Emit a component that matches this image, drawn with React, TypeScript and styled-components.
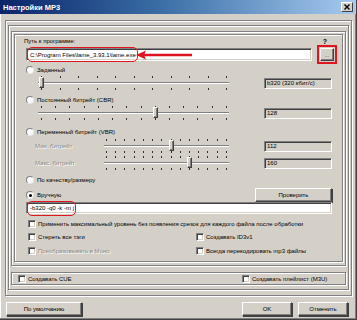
import React from "react";
import styled, { createGlobalStyle } from "styled-components";

const GlobalStyle = createGlobalStyle`
  html, body { margin: 0; padding: 0; background: #d4d0c8; }
  body { font-family: "Liberation Sans", Arial, sans-serif; }
  * { box-sizing: border-box; }
`;

const Window = styled.div`
  width: 357px;
  height: 320px;
  background: #d4d0c8;
  display: flex;
  flex-direction: column;
  border-right: 1px solid #404040;
  border-bottom: 1px solid #404040;
  box-shadow: inset -1px -1px 0 #808080, inset 1px 0 0 #fff;
  font-size: 6px;
  color: #000;
  overflow: hidden;
`;

const TitleBar = styled.div`
  height: 14px;
  flex: none;
  display: flex;
  align-items: center;
  justify-content: space-between;
  padding: 0 3px 0 3px;
  background: linear-gradient(to right, #0a246a 0%, #3a6ea5 45%, #a6caf0 100%);
`;

const Title = styled.span`
  color: #fff;
  font-weight: bold;
  font-size: 7.5px;
`;

const CloseBtn = styled.div`
  width: 12px;
  height: 10px;
  background: #d4d0c8;
  border: 1px solid;
  border-color: #fff #404040 #404040 #fff;
  display: flex;
  align-items: center;
  justify-content: center;
`;

const Body = styled.div`
  flex: 1;
  display: flex;
  flex-direction: column;
  padding: 6px 4px 0 5px;
`;

const etched = `
  border: 1px solid #808080;
  box-shadow: inset 1px 1px 0 #fff, 1px 1px 0 #fff;
`;

const OuterFrame = styled.div`
  ${etched}
  height: 276px;
  flex: none;
  padding: 4px 2px 0 2px;
  display: flex;
  flex-direction: column;
`;

const InnerFrame = styled.div`
  ${etched}
  height: 265px;
  flex: none;
  padding: 5px 2px 4px 2px;
  display: flex;
  flex-direction: column;
`;

const MainGroup = styled.div`
  ${etched}
  height: 235px;
  flex: none;
  padding: 2px;
  display: flex;
  flex-direction: column;
`;

const Group = styled.div`
  ${etched}
  height: 228px;
  flex: none;
  padding: 1px 8px 0 9px;
  display: flex;
  flex-direction: column;
`;

const CueGroup = styled.div`
  ${etched}
  margin-top: 6px;
  height: 13px;
  flex: none;
  display: flex;
  align-items: center;
  padding: 0 0 0 6px;
`;

const Row = styled.div<{ $h: number; $mt?: number }>`
  display: flex;
  align-items: center;
  flex: none;
  height: ${(p) => p.$h}px;
  margin-top: ${(p) => p.$mt ?? 0}px;
  padding-right: 2px;
  position: relative;
`;

const Label = styled.span<{ $w?: number; $ml?: number; $disabled?: boolean }>`
  white-space: nowrap;
  flex: none;
  width: ${(p) => (p.$w ? `${p.$w}px` : "auto")};
  margin-left: ${(p) => p.$ml ?? 0}px;
  color: ${(p) => (p.$disabled ? "#8a8a8a" : "#000")};
  text-shadow: ${(p) => (p.$disabled ? "1px 1px 0 #fff" : "none")};
`;

const Help = styled.span`
  margin-left: auto;
  margin-right: 5px;
  font-weight: bold;
  font-size: 7px;
`;

const sunken = `
  border: 1px solid;
  border-color: #808080 #fff #fff #808080;
  box-shadow: inset 1px 1px 0 #404040, inset -1px -1px 0 #d4d0c8;
`;

const raised = `
  border: 1px solid;
  border-color: #fff #404040 #404040 #fff;
  box-shadow: inset -1px -1px 0 #808080;
  background: #d4d0c8;
`;

const TextBox = styled.div<{ $w?: number; $h: number; $ml?: number; $white?: boolean; $grow?: boolean }>`
  ${sunken}
  flex: ${(p) => (p.$grow ? "1" : "none")};
  position: relative;
  width: ${(p) => (p.$w ? `${p.$w}px` : "auto")};
  height: ${(p) => p.$h}px;
  margin-left: ${(p) => (p.$ml === undefined ? "auto" : `${p.$ml}px`)};
  background: ${(p) => (p.$white ? "#fff" : "#d4d0c8")};
  display: flex;
  align-items: center;
  padding-left: 2px;
  white-space: nowrap;
`;

const Highlight = styled.span`
  display: inline-flex;
  align-items: center;
  height: 15px;
  margin-left: -2px;
  padding: 0 1px 0 2px;
  border: 1.5px solid #e0141e;
  border-radius: 5px;
`;

const ArrowWrap = styled.svg`
  position: absolute;
  left: 109px;
  top: 1px;
`;

const BrowseBtn = styled.div`
  ${raised}
  flex: none;
  width: 14px;
  height: 13px;
  margin-left: 8px;
  outline: 2px solid #e0141e;
  outline-offset: 1px;
  display: flex;
  align-items: flex-end;
  justify-content: center;
  font-size: 5px;
  padding-bottom: 2px;
  color: #404040;
`;

const Button = styled.div<{ $w: number; $ml?: string }>`
  ${raised}
  flex: none;
  width: ${(p) => p.$w}px;
  height: 14px;
  margin-left: ${(p) => p.$ml ?? "0"};
  display: flex;
  align-items: center;
  justify-content: center;
  box-shadow: inset -1px -1px 0 #808080, 1px 1px 0 #404040;
`;

const RadioCircle = styled.span<{ $checked?: boolean }>`
  flex: none;
  width: 8px;
  height: 8px;
  border-radius: 50%;
  margin-left: 2px;
  margin-right: 3px;
  background: #fff;
  border: 1px solid;
  border-color: #808080 #e8e8e8 #e8e8e8 #808080;
  display: flex;
  align-items: center;
  justify-content: center;
  &::after {
    content: "";
    width: 3px;
    height: 3px;
    border-radius: 50%;
    background: ${(p) => (p.$checked ? "#000" : "transparent")};
  }
`;

const CheckBox = styled.span`
  ${sunken}
  flex: none;
  width: 8px;
  height: 8px;
  background: #fff;
  margin-right: 2px;
`;

const CheckItem = styled.div<{ $ml?: number; $w?: number }>`
  display: flex;
  align-items: center;
  flex: none;
  width: ${(p) => (p.$w ? `${p.$w}px` : "auto")};
  margin-left: ${(p) => p.$ml ?? 0}px;
`;

const SliderBox = styled.div<{ $ml: number; $w: number }>`
  position: relative;
  flex: none;
  height: 16px;
  width: ${(p) => p.$w}px;
  margin-left: ${(p) => p.$ml}px;
  display: flex;
  flex-direction: column;
  padding-top: 1px;
`;

const Ticks = styled.div<{ $pl: number; $pr: number; $mt: number }>`
  display: flex;
  justify-content: space-between;
  height: 2px;
  margin-top: ${(p) => p.$mt}px;
  padding: 0 ${(p) => p.$pr}px 0 ${(p) => p.$pl}px;
`;

const Tick = styled.span`
  width: 1px;
  height: 2px;
  background: #303030;
`;

const Track = styled.div`
  height: 2px;
  margin-top: 4px;
  border-top: 1px solid #808080;
  border-bottom: 1px solid #fff;
`;

const Thumb = styled.div`
  position: absolute;
  top: 2px;
  width: 5px;
  height: 11px;
  background: #d4d0c8;
  border: 1px solid;
  border-color: #fff #404040 #404040 #fff;
  box-shadow: inset -1px -1px 0 #808080;
`;

const Footer = styled.div`
  display: flex;
  align-items: center;
  margin-top: 6px;
  padding: 0 4px 0 1px;
  height: 14px;
`;

function Slider({ ml, w, n, value, pl, pr }: { ml: number; w: number; n: number; value: number; pl: number; pr: number }) {
  const span = w - pl - pr - 1;
  const center = pl + (value * span) / (n - 1) + 0.5;
  const ticks = Array.from({ length: n }, (_, i) => <Tick key={i} />);
  return (
    <SliderBox $ml={ml} $w={w}>
      <Ticks $pl={pl} $pr={pr} $mt={0}>{ticks}</Ticks>
      <Track />
      <Ticks $pl={pl} $pr={pr} $mt={4}>{ticks}</Ticks>
      <Thumb style={{ left: `${Math.round(center - 2.5)}px` }} />
    </SliderBox>
  );
}

function Radio({ label, checked }: { label: string; checked?: boolean }) {
  return (
    <>
      <RadioCircle $checked={checked} />
      <Label>{label}</Label>
    </>
  );
}

function Check({ label, ml, w, disabled }: { label: string; ml?: number; w?: number; disabled?: boolean }) {
  return (
    <CheckItem $ml={ml} $w={w}>
      <CheckBox />
      <Label $disabled={disabled}>{label}</Label>
    </CheckItem>
  );
}

export default function App() {
  return (
    <Window>
      <GlobalStyle />
      <TitleBar>
        <Title>Настройки MP3</Title>
        <CloseBtn>
          <svg width="6" height="6" viewBox="0 0 6 6">
            <path d="M0.5 0.5 L5.5 5.5 M5.5 0.5 L0.5 5.5" stroke="#000" strokeWidth="1.4" />
          </svg>
        </CloseBtn>
      </TitleBar>
      <Body>
        <OuterFrame>
          <InnerFrame>
            <MainGroup>
              <Group>
                <Row $h={10}>
                  <Label>Путь к программе:</Label>
                  <Help>?</Help>
                </Row>
                <Row $h={15} $mt={1}>
                  <TextBox $white $w={286} $h={13} $ml={2}>
                    <Highlight>C:\Program Files\lame_3.93.1\lame.exe</Highlight>
                    <ArrowWrap width="56" height="10" viewBox="0 0 56 10">
                      <path d="M7 5 H56" stroke="#e0141e" strokeWidth="2.6" />
                      <path d="M0 5 L10 0.5 L8 5 L10 9.5 Z" fill="#e0141e" />
                    </ArrowWrap>
                  </TextBox>
                  <BrowseBtn>...</BrowseBtn>
                </Row>
                <Row $h={10} $mt={3}>
                  <Radio label="Заданный" />
                </Row>
                <Row $h={16}>
                  <Slider ml={14} w={191} n={11} value={0} pl={3} pr={2} />
                  <TextBox $w={68} $h={11}>b320 (320 кбит/с)</TextBox>
                </Row>
                <Row $h={10} $mt={4}>
                  <Radio label="Постоянный битрейт (CBR)" />
                </Row>
                <Row $h={16}>
                  <Slider ml={14} w={191} n={14} value={8} pl={3} pr={2} />
                  <TextBox $w={68} $h={11}>128</TextBox>
                </Row>
                <Row $h={10} $mt={6}>
                  <Radio label="Переменный битрейт (VBR)" />
                </Row>
                <Row $h={16} $mt={1}>
                  <Label $disabled $w={69} $ml={11}>Мин. битрейт</Label>
                  <Slider ml={0} w={125} n={14} value={7} pl={2} pr={2} />
                  <TextBox $w={68} $h={11}>112</TextBox>
                </Row>
                <Row $h={16} $mt={1}>
                  <Label $disabled $w={69} $ml={11}>Макс. битрейт</Label>
                  <Slider ml={0} w={125} n={14} value={9} pl={2} pr={2} />
                  <TextBox $w={68} $h={11}>160</TextBox>
                </Row>
                <Row $h={10} $mt={4}>
                  <Radio label="По качеству/размеру" />
                </Row>
                <Row $h={14} $mt={3}>
                  <Radio label="Вручную" checked />
                  <Button $w={77} $ml="auto">Проверить</Button>
                </Row>
                <Row $h={12}>
                  <TextBox $white $grow $h={12} $ml={2}>
                    <Highlight>-b320 -q0 -k -m j</Highlight>
                  </TextBox>
                </Row>
                <Row $h={10} $mt={5}>
                  <Check ml={4} label="Применить максимальный уровень без появления срезок для каждого файла после обработки" />
                </Row>
                <Row $h={10} $mt={3}>
                  <Check ml={4} w={168} label="Стереть все тэги" />
                  <Check label="Создавать ID3v1" />
                </Row>
                <Row $h={10} $mt={4}>
                  <Check ml={4} w={168} label="Преобразовывать в Моно" disabled />
                  <Check label="Всегда перекодировать mp3 файлы" />
                </Row>
              </Group>
            </MainGroup>
            <CueGroup>
              <Check w={224} label="Создавать CUE" />
              <Check label="Создавать плейлист (M3U)" />
            </CueGroup>
          </InnerFrame>
        </OuterFrame>
        <Footer>
          <Button $w={76}>По умолчанию</Button>
          <Button $w={50} $ml="auto">OK</Button>
          <Button $w={50} $ml="6px">Отменить</Button>
        </Footer>
      </Body>
    </Window>
  );
}
